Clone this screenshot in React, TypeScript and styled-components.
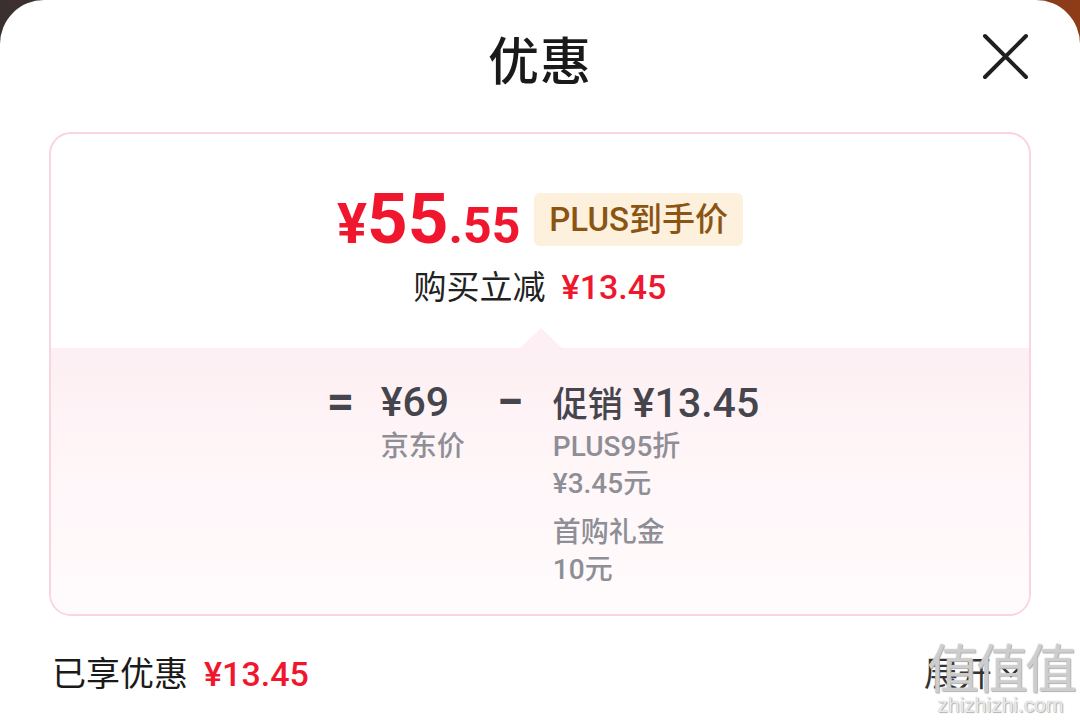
import React from "react";
import styled, { createGlobalStyle } from "styled-components";

const GlobalStyle = createGlobalStyle`
  html, body {
    margin: 0;
    padding: 0;
  }
  body {
    width: 1080px;
    height: 720px;
    overflow: hidden;
    background: linear-gradient(90deg, #3b3030 0%, #5a3a2c 50%, #8e3c18 100%);
    font-family: "Noto Sans CJK SC", "Noto Sans", sans-serif;
  }
`;

const NUM = `"Roboto", "Noto Sans CJK SC", sans-serif`;

const Sheet = styled.div`
  position: relative;
  width: 1080px;
  height: 720px;
  background: #fff;
  border-radius: 44px 44px 0 0;
  overflow: hidden;
`;

const Header = styled.header`
  height: 116px;
  padding-bottom: 4px;
  display: flex;
  align-items: center;
  justify-content: center;
  position: relative;
`;

const Title = styled.h1`
  margin: 0;
  font-size: 51px;
  font-weight: 500;
  color: #1a1a1a;
  letter-spacing: 1px;
`;

const CloseButton = styled.button`
  position: absolute;
  right: 50px;
  top: 33px;
  width: 48px;
  height: 48px;
  padding: 0;
  border: none;
  background: none;
`;

const Card = styled.section`
  margin: 12px 0 0 49px;
  width: 982px;
  height: 484px;
  box-sizing: border-box;
  border: 2px solid #f9d5df;
  border-radius: 22px;
  overflow: hidden;
  display: flex;
  flex-direction: column;
`;

const Summary = styled.div`
  height: 214px;
  display: flex;
  flex-direction: column;
  align-items: center;
  padding-top: 54px;
  box-sizing: border-box;
`;

const PriceRow = styled.div`
  display: flex;
  align-items: center;
  gap: 14px;
  margin-left: 0;
`;

const Price = styled.div`
  color: #f0162e;
  font-family: ${NUM};
  font-weight: 700;
  line-height: 62px;
  display: flex;
  align-items: baseline;
`;

const PricePart = styled.span<{ size: number }>`
  font-size: ${(p) => p.size}px;
`;

const Badge = styled.span`
  background: #fdf0dd;
  color: #8a5512;
  font-size: 33px;
  font-weight: 500;
  height: 53px;
  line-height: 53px;
  padding: 0 15px;
  border-radius: 6px;
  font-family: ${NUM};
  margin-top: -6px;
`;

const SubLine = styled.div`
  margin-top: 4px;
  display: flex;
  align-items: baseline;
  gap: 16px;
  font-size: 33px;
  color: #222;
`;

const RedAmount = styled.span<{ size: number }>`
  color: #f0162e;
  font-family: ${NUM};
  font-weight: 500;
  font-size: ${(p) => p.size}px;
`;

const Detail = styled.div`
  position: relative;
  flex: 1;
  background: linear-gradient(180deg, #fdeff3 0%, #fff6f8 45%, #fffbfc 100%);
  display: flex;
  justify-content: center;
  padding-top: 32px;
  box-sizing: border-box;

  &::before {
    content: "";
    position: absolute;
    left: 468px;
    top: -20px;
    width: 44px;
    height: 21px;
    background: #fdeff3;
    clip-path: polygon(50% 0, 100% 100%, 0 100%);
  }
`;

const Formula = styled.div`
  display: flex;
  align-items: flex-start;
  margin-left: 6px;
`;

const Operator = styled.span<{ gapLeft: number }>`
  width: 26px;
  text-align: center;
  font-family: ${NUM};
  font-size: 48px;
  font-weight: 700;
  color: #45454d;
  line-height: 44px;
  margin-left: ${(p) => p.gapLeft}px;
`;

const Term = styled.div<{ gapLeft: number }>`
  display: flex;
  flex-direction: column;
  margin-left: ${(p) => p.gapLeft}px;
`;

const TermHead = styled.div`
  display: flex;
  align-items: baseline;
  gap: 10px;
  color: #45454d;
  height: 44px;
  line-height: 44px;
  margin-bottom: 4px;
`;

const TermLabel = styled.span`
  font-size: 35px;
  font-weight: 500;
`;

const TermValue = styled.span`
  font-family: ${NUM};
  font-size: 41px;
  font-weight: 500;
`;

const Note = styled.div`
  font-family: ${NUM};
  font-size: 28px;
  font-weight: 500;
  color: #8e8e96;
  line-height: 37px;
`;

const NoteGroup = styled.div`
  & + & {
    margin-top: 12px;
  }
`;

const Footer = styled.footer`
  display: flex;
  align-items: center;
  justify-content: space-between;
  height: 110px;
  padding: 0 50px 0 52px;
`;

const FooterLeft = styled.div`
  display: flex;
  align-items: baseline;
  gap: 16px;
  font-size: 34px;
  color: #1a1a1a;
`;

const Expand = styled.div`
  display: flex;
  align-items: center;
  gap: 6px;
  font-size: 34px;
  color: #333;
  margin-right: 6px;
`;

const Watermark = styled.div`
  position: absolute;
  right: 6px;
  bottom: 4px;
  display: flex;
  flex-direction: column;
  align-items: center;
  color: rgba(255, 255, 255, 0.5);
  text-shadow: 0 0 1px #9a9a9a, 1px 1px 1px #b5b5b5;
  pointer-events: none;
`;

const WatermarkChars = styled.span`
  font-size: 52px;
  line-height: 56px;
  letter-spacing: -3px;
`;

const WatermarkUrl = styled.span`
  font-family: "Liberation Sans", sans-serif;
  font-size: 21px;
  line-height: 22px;
  color: rgba(255, 255, 255, 0.8);
`;

export default function App() {
  return (
    <>
      <GlobalStyle />
      <Sheet>
        <Header>
          <Title>优惠</Title>
          <CloseButton aria-label="关闭">
            <svg width="48" height="48" viewBox="0 0 48 48">
              <path
                d="M3 3 L44 44 M44 3 L3 44"
                stroke="#1f1f1f"
                strokeWidth="4"
                strokeLinecap="round"
              />
            </svg>
          </CloseButton>
        </Header>

        <Card>
          <Summary>
            <PriceRow>
              <Price>
                <PricePart size={56}>¥</PricePart>
                <PricePart size={71}>55</PricePart>
                <PricePart size={50}>.55</PricePart>
              </Price>
              <Badge>PLUS到手价</Badge>
            </PriceRow>
            <SubLine>
              <span>购买立减</span>
              <RedAmount size={34}>¥13.45</RedAmount>
            </SubLine>
          </Summary>

          <Detail>
            <Formula>
              <Operator gapLeft={0}>=</Operator>
              <Term gapLeft={28}>
                <TermHead>
                  <TermValue>¥69</TermValue>
                </TermHead>
                <Note>京东价</Note>
              </Term>
              <Operator gapLeft={32}>−</Operator>
              <Term gapLeft={30}>
                <TermHead>
                  <TermLabel>促销</TermLabel>
                  <TermValue>¥13.45</TermValue>
                </TermHead>
                <NoteGroup>
                  <Note>PLUS95折</Note>
                  <Note>¥3.45元</Note>
                </NoteGroup>
                <NoteGroup>
                  <Note>首购礼金</Note>
                  <Note>10元</Note>
                </NoteGroup>
              </Term>
            </Formula>
          </Detail>
        </Card>

        <Footer>
          <FooterLeft>
            <span>已享优惠</span>
            <RedAmount size={34}>¥13.45</RedAmount>
          </FooterLeft>
          <Expand>
            <span>展开</span>
            <svg width="26" height="26" viewBox="0 0 26 26">
              <path
                d="M4 9 L13 18 L22 9"
                fill="none"
                stroke="#333"
                strokeWidth="2.5"
              />
            </svg>
          </Expand>
        </Footer>

        <Watermark>
          <WatermarkChars>值值值</WatermarkChars>
          <WatermarkUrl>zhizhizhi.com</WatermarkUrl>
        </Watermark>
      </Sheet>
    </>
  );
}
